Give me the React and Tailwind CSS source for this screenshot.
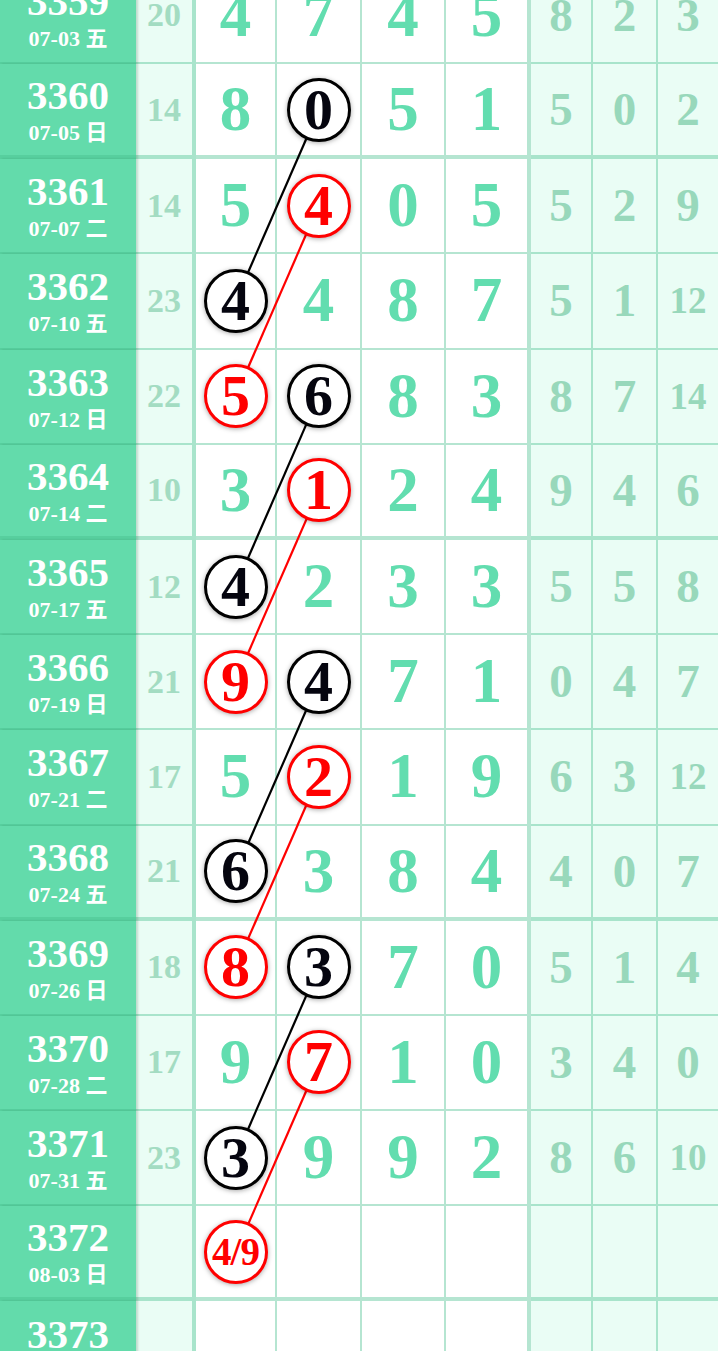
import React from 'react';

const ROW_H = 95.2;

// main values: number, or [value, 'k' | 'r'] for a ringed number
const rows = [
  { p: 3359, d: '07-03', w: '五', s: '20', m: [4, 7, 4, 5], r: [8, 2, 3] },
  { p: 3360, d: '07-05', w: '日', s: '14', m: [8, [0, 'k'], 5, 1], r: [5, 0, 2] },
  { p: 3361, d: '07-07', w: '二', s: '14', m: [5, [4, 'r'], 0, 5], r: [5, 2, 9] },
  { p: 3362, d: '07-10', w: '五', s: '23', m: [[4, 'k'], 4, 8, 7], r: [5, 1, 12] },
  { p: 3363, d: '07-12', w: '日', s: '22', m: [[5, 'r'], [6, 'k'], 8, 3], r: [8, 7, 14] },
  { p: 3364, d: '07-14', w: '二', s: '10', m: [3, [1, 'r'], 2, 4], r: [9, 4, 6] },
  { p: 3365, d: '07-17', w: '五', s: '12', m: [[4, 'k'], 2, 3, 3], r: [5, 5, 8] },
  { p: 3366, d: '07-19', w: '日', s: '21', m: [[9, 'r'], [4, 'k'], 7, 1], r: [0, 4, 7] },
  { p: 3367, d: '07-21', w: '二', s: '17', m: [5, [2, 'r'], 1, 9], r: [6, 3, 12] },
  { p: 3368, d: '07-24', w: '五', s: '21', m: [[6, 'k'], 3, 8, 4], r: [4, 0, 7] },
  { p: 3369, d: '07-26', w: '日', s: '18', m: [[8, 'r'], [3, 'k'], 7, 0], r: [5, 1, 4] },
  { p: 3370, d: '07-28', w: '二', s: '17', m: [9, [7, 'r'], 1, 0], r: [3, 4, 0] },
  { p: 3371, d: '07-31', w: '五', s: '23', m: [[3, 'k'], 9, 9, 2], r: [8, 6, 10] },
  { p: 3372, d: '08-03', w: '日', s: '', m: [['4/9', 'r'], '', '', ''], r: ['', '', ''] },
  { p: 3373, d: '08-05', w: '二', s: '', m: ['', '', '', ''], r: ['', '', ''] },
];

// [from row index, to row index, colour]
const links = [
  [1, 3, '#000'], [4, 6, '#000'], [7, 9, '#000'], [10, 12, '#000'],
  [2, 4, '#f00'], [5, 7, '#f00'], [8, 10, '#f00'], [11, 13, '#f00'],
];

const line = 'border-[#46be8c66]';
const mainW = ['w-[81px] border-r-2', 'w-[85px] border-r-2', 'w-[84px] border-r-2', 'w-[85px] border-r-4'];
const sideW = ['w-[62px] border-r-2', 'w-[65px] border-r-2', 'w-[60px]'];

function Ring({ v, c }) {
  const red = c === 'r';
  const small = String(v).length > 1;
  return (
    <div
      className={`relative z-10 flex h-[64px] w-[64px] items-center justify-center rounded-full border-[3px] bg-white shadow-[0_1px_5px_rgba(0,0,0,0.35)] ${red ? 'border-[#f00] text-[#f00]' : 'border-black text-[#05050f]'} ${small ? 'text-[39px] tracking-[-1px]' : 'text-[58px]'} leading-none`}
    >
      {v}
    </div>
  );
}

function Row({ row }) {
  const thick = (row.p - 3360) % 4 === 0;
  const bb = thick ? 'border-b-4' : 'border-b-2';
  return (
    <div className="flex h-[95.2px]">
      <div className={`relative z-[1] flex w-[136px] flex-col items-center justify-center gap-[6px] bg-[#63dbab] text-white shadow-[2px_0_2px_rgba(0,60,30,0.18)] ${bb} ${line}`}>
        <div className="text-[41px] leading-none">{row.p}</div>
        <div className="text-[22px] leading-none">{row.d} {row.w}</div>
      </div>
      <div className={`flex w-[60px] items-center justify-center border-r-4 bg-[#eafdf5] text-[34px] leading-none text-[#a3dcc2] ${bb} ${line}`}>
        {row.s}
      </div>
      {row.m.map((v, i) => (
        <div key={i} className={`flex items-center justify-center bg-white text-[63px] leading-none text-[#62ddaf] ${mainW[i]} ${bb} ${line}`}>
          {Array.isArray(v) ? <Ring v={v[0]} c={v[1]} /> : v}
        </div>
      ))}
      {row.r.map((v, i) => (
        <div key={i} className={`flex items-center justify-center bg-[#eafdf5] leading-none text-[#98d8bb] ${String(v).length > 1 ? 'text-[37px]' : 'text-[47px]'} ${sideW[i]} ${bb} ${line}`}>
          {v}
        </div>
      ))}
    </div>
  );
}

export default function App() {
  const cy = (i) => i * ROW_H + 46.6;
  return (
    <div className="h-[1351px] w-[718px] overflow-hidden bg-white font-['Liberation_Serif','Noto_Sans_CJK_SC',serif] font-bold">
      <div className="relative -mt-[31.2px]">
        {rows.map((row) => (
          <Row key={row.p} row={row} />
        ))}
        <svg className="pointer-events-none absolute left-0 top-0 z-[5] h-full w-[718px]">
          {links.map(([a, b, col], i) => (
            <line key={i} x1={318.5} y1={cy(a)} x2={235.5} y2={cy(b)} stroke={col} strokeWidth="2.2" />
          ))}
        </svg>
      </div>
    </div>
  );
}
